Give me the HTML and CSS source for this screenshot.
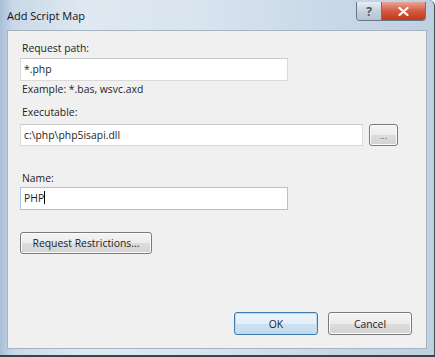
FILE: index.html
```html
<!doctype html>
<html>
<head>
<meta charset="utf-8">
<title>Add Script Map</title>
<link rel="stylesheet" href="styles.css">
</head>
<body>
	<div class="window">
		<div class="titlebar">
			<span class="title">Add Script Map</span>
			<div class="caption">
				<span class="cap-btn help">?</span>
				<span class="cap-btn close">
					<svg width="11" height="9" viewBox="0 0 11 9"><path d="M1.5 1 L9.5 8 M9.5 1 L1.5 8" stroke="#fff" stroke-width="2.2" stroke-linecap="round"/></svg>
				</span>
			</div>
		</div>
		<div class="client">
			<div class="label first">Request path:</div>
			<div class="field short">*.php</div>
			<div class="hint">Example: *.bas, wsvc.axd</div>
			<div class="label exe">Executable:</div>
			<div class="row">
				<div class="field long">c:\php\php5isapi.dll</div>
				<span class="btn browse">...</span>
			</div>
			<div class="label name">Name:</div>
			<div class="field short focus">PHP<span class="caret"></span></div>
			<span class="btn restrict">Request Restrictions...</span>
			<div class="footer">
				<span class="btn ok">OK</span>
				<span class="btn cancel">Cancel</span>
			</div>
		</div>
	</div>
</body>
</html>
```
FILE: styles.css
```css
body{
	margin: 0;
	background-color: #fff;
	font-family: "Open Sans", "DejaVu Sans", sans-serif;
	font-size: 10.4px;
	color: #1e1e1e;
}
.window{
	width: 435px;
	height: 357px;
	box-sizing: border-box;
	display: flex;
	flex-direction: column;
	background: linear-gradient(90deg, #a9bfd8 0, #c9d8e8 3%, #e0e9f2 20%, #d9e4ef 45%, #cad8e7 75%, #bfd0e2 100%);
	border-right: 1px solid #4a4f55;
	border-bottom: 2px solid #3d4247;
	border-radius: 0 6px 0 0;
}
.titlebar{
	height: 30px;
	display: flex;
	align-items: flex-start;
}
.title{
	margin: 8px 0 0 7px;
	font-size: 11px;
	color: #111;
}
.caption{
	margin-left: auto;
	margin-right: 8px;
	display: flex;
	border: 1px solid #6b7684;
	border-top: none;
	border-radius: 0 0 4px 4px;
	overflow: hidden;
	margin-top: 2px;
}
.cap-btn{
	height: 18px;
	display: flex;
	align-items: center;
	justify-content: center;
}
.help{
	width: 24px;
	background: linear-gradient(#e6edf4, #c5d2df 50%, #b4c3d3);
	border-right: 1px solid #6b7684;
	color: #4b5866;
	font-weight: bold;
	font-size: 12px;
}
.close{
	width: 43px;
	background: linear-gradient(#e8a595, #d45a40 50%, #c2371c);
}
.client{
	flex: 1;
	margin: 0 7px 6px 7px;
	background: #f0f0f0;
	border: 1px solid #a5b3c2;
	padding: 9px 0 13px 12px;
	display: flex;
	flex-direction: column;
	align-items: flex-start;
}
.label, .hint{
	line-height: 16px;
	margin-left: 2px;
}
.field{
	height: 21px;
	line-height: 21px;
	background: #fff;
	border: 1px solid #dadada;
	border-top-color: #c9c9c9;
	padding-left: 3px;
	margin-top: 2px;
	box-sizing: content-box;
}
.short{
	width: 263px;
}
.long{
	width: 338px;
	height: 20px;
	line-height: 20px;
	margin-top: 0;
}
.focus{
	border-color: #a7c6e0;
	margin-top: 1px;
}
.caret{
	display: inline-block;
	width: 1px;
	height: 13px;
	background: #000;
	vertical-align: -2px;
}
.exe{
	margin-top: 7px;
}
.row{
	display: flex;
	margin-top: 4px;
}
.name{
	margin-top: 24px;
}
.btn{
	display: flex;
	align-items: center;
	justify-content: center;
	box-sizing: border-box;
	border: 1px solid #7a7a7a;
	border-radius: 3px;
	background: linear-gradient(#f4f4f4, #ececec 50%, #dddddd 51%, #d2d2d2);
	box-shadow: inset 0 0 0 1px #fbfbfb;
	color: #1e1e1e;
}
.browse{
	width: 29px;
	height: 22px;
	margin-left: 6px;
	font-size: 9px;
	color: #555;
}
.restrict{
	width: 132px;
	height: 22px;
	margin-top: 22px;
}
.footer{
	margin-top: auto;
	align-self: stretch;
	display: flex;
	justify-content: flex-end;
	gap: 10px;
	padding-right: 14px;
}
.ok, .cancel{
	width: 84px;
	height: 23px;
}
.ok{
	border-color: #3d7bad;
	box-shadow: inset 0 0 0 1px #b6dcf5;
	background: linear-gradient(#eef5fb, #e3eef8 50%, #cfe2f2 51%, #c3d9ec);
}
```
